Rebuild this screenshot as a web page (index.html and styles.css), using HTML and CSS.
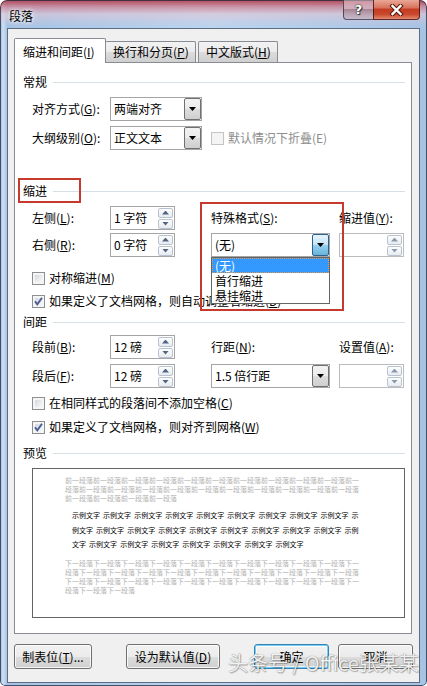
FILE: index.html
```html
<!DOCTYPE html>
<html lang="zh-CN">
<head>
<meta charset="utf-8">
<title>段落</title>
<link rel="stylesheet" href="styles.css">
</head>
<body>
<div class="window">
  <div class="titlebar">
    <div class="title">段落</div>
    <div class="caps">
      <div class="cap help">?</div>
      <div class="cap close">
        <svg width="15" height="12" viewBox="0 0 15 12"><path d="M3.5 2 L11.5 10 M11.5 2 L3.5 10" stroke="#5a1c12" stroke-width="4.4" stroke-linecap="square" fill="none"/><path d="M3.5 2 L11.5 10 M11.5 2 L3.5 10" stroke="#ffffff" stroke-width="2.4" stroke-linecap="square" fill="none"/></svg>
      </div>
    </div>
  </div>

  <div class="client">
    <div class="tabs">
      <div class="tab active">缩进和间距(<u>I</u>)</div>
      <div class="tab t2">换行和分页(<u>P</u>)</div>
      <div class="tab t3">中文版式(<u>H</u>)</div>
    </div>

    <div class="panel">
      <div class="sechead h1"><span>常规</span><i class="rule"></i></div>
      <div class="row r1">
        <span class="lbl c1">对齐方式(<u>G</u>):</span>
        <div class="combo w92"><span class="val">两端对齐</span><span class="dd"></span></div>
      </div>
      <div class="row r2">
        <span class="lbl c1">大纲级别(<u>O</u>):</span>
        <div class="combo w92"><span class="val">正文文本</span><span class="dd"></span></div>
        <div class="chkline inrow disabled c4"><span class="chk"></span>默认情况下折叠(E)</div>
      </div>

      <div class="sechead h2"><span>缩进</span><i class="rule"></i></div>
      <div class="row r3">
        <span class="lbl c1">左侧(<u>L</u>):</span>
        <div class="spin c2"><span class="val">1 字符</span><span class="spbtns"><span class="sp up"></span><span class="sp down"></span></span></div>
        <span class="lbl c4">特殊格式(<u>S</u>):</span>
        <span class="lbl c6">缩进值(<u>Y</u>):</span>
      </div>
      <div class="row r4">
        <span class="lbl c1">右侧(<u>R</u>):</span>
        <div class="spin c2"><span class="val">0 字符</span><span class="spbtns"><span class="sp up"></span><span class="sp down"></span></span></div>
        <div class="combo c4 special"><span class="val">(无)</span><span class="dd hot"></span>
          <div class="ddlist">
            <div class="opt sel">(无)</div>
            <div class="opt">首行缩进</div>
            <div class="opt">悬挂缩进</div>
          </div>
        </div>
        <div class="spin c6 off"><span class="val"></span><span class="spbtns"><span class="sp up"></span><span class="sp down"></span></span></div>
      </div>
      <div class="chkline k1"><span class="chk"></span>对称缩进(<u>M</u>)</div>
      <div class="chkline k2"><span class="chk on"><svg width="11" height="11" viewBox="0 0 11 11"><path d="M2 5.2 L4.3 8.4 L9 1.8" stroke="#4b5f96" stroke-width="1.9" fill="none"/></svg></span>如果定义了文档网格，则自动调整右缩进(<u>D</u>)</div>

      <div class="sechead h3"><span>间距</span><i class="rule"></i></div>
      <div class="row r5">
        <span class="lbl c1">段前(<u>B</u>):</span>
        <div class="spin c2"><span class="val">12 磅</span><span class="spbtns"><span class="sp up"></span><span class="sp down"></span></span></div>
        <span class="lbl c4">行距(<u>N</u>):</span>
        <span class="lbl c6">设置值(<u>A</u>):</span>
      </div>
      <div class="row r6">
        <span class="lbl c1">段后(<u>F</u>):</span>
        <div class="spin c2"><span class="val">12 磅</span><span class="spbtns"><span class="sp up"></span><span class="sp down"></span></span></div>
        <div class="combo c4"><span class="val">1.5 倍行距</span><span class="dd"></span></div>
        <div class="spin c6 off"><span class="val"></span><span class="spbtns"><span class="sp up"></span><span class="sp down"></span></span></div>
      </div>
      <div class="chkline k3"><span class="chk"></span>在相同样式的段落间不添加空格(<u>C</u>)</div>
      <div class="chkline k4"><span class="chk on"><svg width="11" height="11" viewBox="0 0 11 11"><path d="M2 5.2 L4.3 8.4 L9 1.8" stroke="#4b5f96" stroke-width="1.9" fill="none"/></svg></span>如果定义了文档网格，则对齐到网格(<u>W</u>)</div>

      <div class="sechead h4"><span>预览</span><i class="rule"></i></div>
      <div class="preview">
        <div class="pv-gray">
          <div>前一段落前一段落前一段落前一段落前一段落前一段落前一段落前一段落前一段落前一段落前一</div>
          <div>段落前一段落前一段落前一段落前一段落前一段落前一段落前一段落前一段落前一段落前一段落</div>
          <div>前一段落前一段落前一段落前一段落</div>
        </div>
        <div class="pv-sample">
          <div>示例文字 示例文字 示例文字 示例文字 示例文字 示例文字 示例文字 示例文字 示例文字 示</div>
          <div>例文字 示例文字 示例文字 示例文字 示例文字 示例文字 示例文字 示例文字 示例文字 示例</div>
          <div>文字 示例文字 示例文字 示例文字 示例文字 示例文字 示例文字 示例文字</div>
        </div>
        <div class="pv-gray next">
          <div>下一段落下一段落下一段落下一段落下一段落下一段落下一段落下一段落下一段落下一段落下一</div>
          <div>段落下一段落下一段落下一段落下一段落下一段落下一段落下一段落下一段落下一段落下一段落</div>
          <div>下一段落下一段落下一段落下一段落下一段落下一段落下一段落下一段落下一段落下一段落下一</div>
          <div>段落下一段落下一段落</div>
        </div>
      </div>

      <div class="redbox rb1"></div>
      <div class="redbox rb2"></div>
    </div>

    <div class="btnrow">
      <div class="btn b1">制表位(<u>T</u>)...</div>
      <div class="btn b2">设为默认值(<u>D</u>)</div>
      <div class="btn b3">确定</div>
      <div class="btn b4">取消</div>
    </div>
  </div>

  <div class="watermark">头条号 / Office张某某</div>
</div>
</body>
</html>
```

FILE: styles.css
```css
* { box-sizing: border-box; }
html, body { margin: 0; padding: 0; }
body {
  width: 427px;
  height: 686px;
  overflow: hidden;
  font-family: "Noto Sans CJK SC", "Microsoft YaHei", sans-serif;
  font-size: 12px;
  line-height: 16px;
  color: #000;
  background: #fff;
}
u { text-decoration: underline; text-underline-offset: 1px; }

.window {
  position: relative;
  width: 427px;
  height: 686px;
  border-radius: 7px 7px 5px 5px;
  overflow: hidden;
  background:
    linear-gradient(180deg, rgba(176,48,62,.85) 0px, rgba(212,118,134,.65) 7px, rgba(236,196,206,.5) 14px, rgba(220,232,245,0) 26px),
    linear-gradient(90deg, #98b8de 0, #cfe0f2 3px, #a6c3e5 7px, #bcd4ee 50%, #a7c3e4 100%);
  box-shadow: inset 0 0 0 1px rgba(30,40,60,.75);
}

.titlebar {
  height: 28px;
  display: flex;
  align-items: flex-start;
}
.title {
  padding: 8px 0 0 9px;
  line-height: 16px;
  text-shadow: 0 0 6px #fff, 0 0 3px #fff;
}
.caps {
  margin-left: auto;
  margin-right: 7px;
  display: flex;
}
.cap {
  height: 20px;
  display: flex;
  align-items: center;
  justify-content: center;
}
.help {
  width: 30px;
  border: 1px solid rgba(50,40,60,.75);
  border-top: none;
  border-right: none;
  border-radius: 0 0 0 4px;
  background: linear-gradient(rgba(255,255,255,.4), rgba(210,180,190,.55) 50%, rgba(150,110,120,.6) 50%, rgba(200,175,185,.55));
  font-family: "DejaVu Sans", sans-serif;
  font-weight: bold;
  font-size: 13px;
  color: #fff;
  text-shadow: 0 0 1px #222, 0 0 2px #333, 1px 1px 0 #444;
}
.close {
  width: 47px;
  border: 1px solid rgba(70,20,20,.85);
  border-top: none;
  border-radius: 0 0 4px 0;
  background: linear-gradient(#e9a797 0, #d9745c 40%, #c43c22 50%, #c9482c 75%, #e48a6e 100%);
}

.client {
  margin: 0 7px;
  height: 655px;
  border: 1px solid #5e6e82;
  background: #f0f0f0;
  padding: 9px 7px 13px 6px;
  display: flex;
  flex-direction: column;
}

.tabs {
  display: flex;
  align-items: flex-end;
  height: 24px;
  position: relative;
  z-index: 1;
  flex: none;
}
.tab {
  height: 21px;
  border: 1px solid #898c95;
  border-bottom: none;
  border-radius: 2px 2px 0 0;
  padding: 2px 0 0 7px;
  line-height: 16px;
  background: linear-gradient(#f2f2f2, #ebebeb 50%, #dddddd 50%, #cfcfcf);
  white-space: nowrap;
}
.tab.active {
  width: 92px;
  height: 25px;
  margin-bottom: -1px;
  padding: 5px 0 0 8px;
  background: #fff;
}
.tab.t2 { width: 91px; margin-left: -1px; }
.tab.t3 { width: 80px; margin-left: 2px; }

.panel {
  position: relative;
  height: 572px;
  border: 1px solid #898c95;
  background: #fff;
  padding: 0 6px 0 8px;
  display: flex;
  flex-direction: column;
  flex: none;
}

.sechead {
  display: flex;
  align-items: center;
  height: 16px;
  flex: none;
}
.rule {
  flex: 1;
  height: 1px;
  background: #d5dfe5;
  margin-left: 6px;
}
.h1 { margin-top: 11px; }
.h2 { margin-top: 33px; }
.h3 { margin-top: 5px; }
.h4 { margin-top: 10px; }

.row {
  display: grid;
  grid-template-columns: 78px 65px 36px 119px 9px 65px;
  align-items: center;
  height: 24px;
  margin-left: 9px;
  flex: none;
}
.r1 { margin-top: 7px; }
.r2 { margin-top: 5px; }
.r3 { margin-top: 7px; }
.r4 { margin-top: 3px; }
.r5 { margin-top: 5px; }
.r6 { margin-top: 5px; }

.c1 { grid-column: 1; }
.c2 { grid-column: 2; }
.c4 { grid-column: 4; }
.c6 { grid-column: 6; }
.lbl { white-space: nowrap; }

.combo {
  position: relative;
  height: 24px;
  border: 1px solid #a5a5a5;
  background: #fff;
  display: flex;
  align-items: center;
}
.combo.w92 { grid-column: 2 / span 2; width: 92px; }
.val { flex: 1; padding-left: 3px; white-space: nowrap; }
.dd {
  width: 17px;
  align-self: stretch;
  border: 1px solid #707070;
  border-radius: 2px;
  background: linear-gradient(#f2f2f2, #ebebeb 50%, #dddddd 50%, #cfcfcf);
  display: flex;
  align-items: center;
  justify-content: center;
}
.dd::after {
  content: "";
  width: 7px;
  height: 4px;
  background: #000;
  clip-path: polygon(0 0, 100% 0, 50% 100%);
}
.dd.hot {
  border-color: #2c628b;
  background: linear-gradient(#e5f4fc, #c4e5f6 50%, #98d1ef 50%, #68b3db);
}

.ddlist {
  position: absolute;
  left: -1px;
  top: 23px;
  width: 119px;
  border: 1px solid #646464;
  background: #fff;
  z-index: 2;
}
.opt {
  height: 15px;
  line-height: 15px;
  padding-left: 3px;
  white-space: nowrap;
}
.opt.sel {
  background: #3399ff;
  color: #fff;
  outline: 1px dotted #e89a4c;
  outline-offset: -1px;
}

.spin {
  height: 24px;
  border: 1px solid #a5a5a5;
  background: #fff;
  display: flex;
  align-items: center;
}
.spbtns {
  display: flex;
  flex-direction: column;
  gap: 1px;
  margin-right: 1px;
}
.sp {
  width: 15px;
  height: 10px;
  border: 1px solid #b9c3cf;
  border-radius: 2px;
  background: linear-gradient(#fdfdfd, #e7ebf0);
  display: flex;
  align-items: center;
  justify-content: center;
}
.sp::after {
  content: "";
  width: 7px;
  height: 4px;
  background: #4f6583;
}
.sp.up::after { clip-path: polygon(50% 0, 100% 100%, 0 100%); }
.sp.down::after { clip-path: polygon(0 0, 100% 0, 50% 100%); }
.spin.off { border-color: #bcbcbc; }
.spin.off .sp::after { background: #8799b2; }

.chkline {
  display: flex;
  align-items: center;
  height: 16px;
  margin-left: 9px;
  white-space: nowrap;
  flex: none;
}
.chkline.inrow { margin-left: 0; }
.k1 { margin-top: 13px; }
.k2 { margin-top: 7px; }
.k3 { margin-top: 7px; }
.k4 { margin-top: 8px; }
.chk {
  width: 13px;
  height: 13px;
  flex: none;
  margin-right: 4px;
  border: 1px solid #8e8f8f;
  background: linear-gradient(135deg, #cacfd5 0%, #e9ecef 55%, #ffffff 100%);
  box-shadow: inset 0 0 0 2px #f5f5f5;
  display: flex;
  align-items: center;
  justify-content: center;
}
.chkline.disabled { color: #8d8d8d; }
.chkline.disabled .chk {
  border-color: #c4c4c4;
  background: #f4f4f4;
  box-shadow: none;
}

.preview {
  flex: none;
  margin: 7px 0 0 9px;
  width: 373px;
  height: 150px;
  border: 1px solid #646464;
  background: #fff;
  padding-top: 7px;
}
.pv-gray {
  margin-left: 32px;
  font-size: 7px;
  line-height: 9px;
  color: #b2b2b2;
  white-space: nowrap;
}
.pv-gray.next { margin-top: 7px; }
.pv-sample {
  margin: 5px 0 0 39px;
  font-size: 7px;
  line-height: 14.5px;
  word-spacing: 1.5px;
  white-space: nowrap;
}

.redbox {
  position: absolute;
  border: 2px solid #c63a2d;
  z-index: 3;
}
.rb1 { left: 3px; top: 115px; width: 63px; height: 25px; }
.rb2 { left: 185px; top: 139px; width: 144px; height: 109px; }

.btnrow {
  display: flex;
  margin-top: 10px;
  height: 25px;
  flex: none;
}
.btn {
  flex: none;
  height: 25px;
  border: 1px solid #707070;
  border-radius: 3px;
  background: linear-gradient(#f2f2f2 0%, #ebebeb 50%, #dddddd 50%, #cfcfcf 100%);
  box-shadow: inset 0 0 0 1px rgba(255,255,255,.8);
  display: flex;
  align-items: center;
  justify-content: center;
  white-space: nowrap;
}
.b1 { width: 78px; }
.b2 { width: 94px; margin-left: 34px; }
.b3 {
  width: 75px;
  margin-left: 34px;
  border-color: #3c7fb1;
  box-shadow: inset 0 0 0 1px #6fd0f5, inset 0 0 0 2px rgba(255,255,255,.7);
}
.b4 { width: 75px; margin-left: 9px; }

.watermark {
  position: absolute;
  left: 228px;
  top: 648px;
  font-size: 20px;
  line-height: 30px;
  color: rgba(255,255,255,.92);
  text-shadow: 0 0 1px rgba(0,0,0,.55), 1px 1px 1px rgba(0,0,0,.25);
  white-space: nowrap;
  z-index: 5;
}
```
